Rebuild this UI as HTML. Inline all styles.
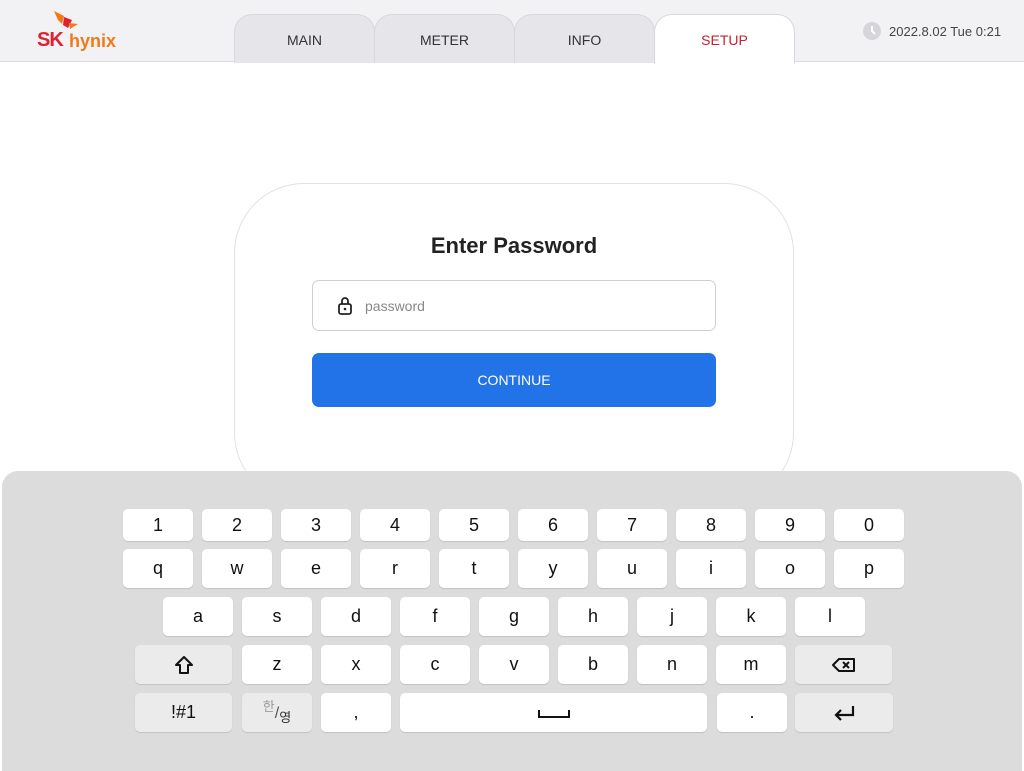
<!DOCTYPE html><html><head><style>
*{margin:0;padding:0;box-sizing:border-box}
body{width:1024px;height:768px;overflow:hidden;background:#fff;font-family:"Liberation Sans","Noto Sans CJK KR",sans-serif;position:relative}
.hdr{position:absolute;left:0;top:0;width:1024px;height:62px;background:#f2f2f4;border-bottom:1px solid #dcdcdf}
.tab{position:absolute;top:14px;height:49px;width:141px;background:#e6e5e9;border:1px solid #d8d8dc;border-bottom:none;border-radius:18px 18px 0 0;text-align:center;line-height:50px;font-size:14px;color:#333}
.tab.on{background:#fff;color:#c8202f;height:50px}
.card{position:absolute;left:234px;top:183px;width:560px;height:320px;border:1px solid #e2e2e2;border-radius:70px;background:#fff}
.kb{position:absolute;left:2px;top:471px;width:1020px;height:300px;background:#dcdcdc;border-radius:16px 16px 0 0}
.k{position:absolute;width:70px;height:32px;background:#fff;border-radius:5px;box-shadow:0 1px 1px rgba(0,0,0,.12);text-align:center;font-size:18px;color:#111;line-height:32px}
.k.g{background:#ebebeb}
</style></head><body>
<div class="hdr">
<svg style="position:absolute;left:52px;top:10px" width="30" height="24" viewBox="0 0 30 24"><path d="M2 1 L12 6 L10 14 L6 10Z" fill="#f07a1a"/><path d="M12 7 L20 10 L16 18 L11 15Z" fill="#e2202f"/><path d="M17 13 L26 14 L18 19Z" fill="#f07a1a"/></svg>
<div style="position:absolute;left:37px;top:29px;font-weight:bold;font-size:20px;color:#e2202f;letter-spacing:-1px">SK</div>
<div style="position:absolute;left:69px;top:31px;font-size:18px;color:#f07a1a;font-weight:bold">hynix</div>
<div class="tab" style="left:234px">MAIN</div>
<div class="tab" style="left:374px">METER</div>
<div class="tab" style="left:514px">INFO</div>
<div class="tab on" style="left:654px">SETUP</div>
<div style="position:absolute;left:863px;top:22px;width:18px;height:18px;border-radius:50%;background:#d6d6da"></div>
<svg style="position:absolute;left:863px;top:22px" width="18" height="18"><path d="M9 4 V9 L12 12" stroke="#fff" stroke-width="2" fill="none"/></svg>
<div style="position:absolute;left:889px;top:24px;font-size:13px;color:#444">2022.8.02 Tue 0:21</div>
</div>
<div class="card"></div>
<div style="position:absolute;left:234px;top:233px;width:560px;text-align:center;font-size:22px;font-weight:bold;color:#222">Enter Password</div>
<div style="position:absolute;left:312px;top:280px;width:404px;height:51px;border:1px solid #cfcfcf;border-radius:7px"></div>
<svg style="position:absolute;left:337px;top:296px" width="16" height="20" viewBox="0 0 16 20"><rect x="2" y="8" width="12" height="10" rx="2" fill="none" stroke="#222" stroke-width="1.8"/><path d="M5 8 V5 a3 3 0 0 1 6 0 V8" fill="none" stroke="#222" stroke-width="1.8"/><circle cx="8" cy="13" r="1.3" fill="#222"/></svg>
<div style="position:absolute;left:365px;top:298px;font-size:14px;color:#888">password</div>
<div style="position:absolute;left:312px;top:353px;width:404px;height:54px;background:#2272e8;border-radius:7px;color:#fff;text-align:center;line-height:54px;font-size:14px">CONTINUE</div>
<div class="kb"></div>
<div id="keys"></div>
<script>
var h='';function k(x,y,w,t,c){h+='<div class="k'+(c?' g':'')+'" style="left:'+x+'px;top:'+y+'px;width:'+w+'px'+(y>540?';height:39px;line-height:39px':'')+'">'+t+'</div>';}
'1234567890'.split('').forEach(function(c,i){k(123+79*i,509,70,c)});
'qwertyuiop'.split('').forEach(function(c,i){k(123+79*i,549,70,c)});
'asdfghjkl'.split('').forEach(function(c,i){k(163+79*i,597,70,c)});
k(135,645,97,'<svg width="20" height="20" viewBox="0 0 20 20" style="vertical-align:middle"><path d="M10 2 L18 10 H14 V18 H6 V10 H2Z" fill="none" stroke="#111" stroke-width="2" stroke-linejoin="round"/></svg>',1);
'zxcvbnm'.split('').forEach(function(c,i){k(242+79*i,645,70,c)});
k(795,645,97,'<svg width="24" height="16" viewBox="0 0 24 16" style="vertical-align:middle"><path d="M7 2 H22 V14 H7 L1 8Z" fill="none" stroke="#111" stroke-width="2" stroke-linejoin="round"/><path d="M11 5 L17 11 M17 5 L11 11" stroke="#111" stroke-width="2"/></svg>',1);
k(135,693,97,'!#1',1);
k(242,693,70,'<span style="font-size:13px;color:#999;position:relative;top:-7px">한</span><span style="font-size:16px;color:#555">/</span><span style="font-size:13px;color:#333;position:relative;top:4px">영</span>',1);
k(321,693,70,',');
k(400,693,307,'<svg width="32" height="12" style="vertical-align:middle"><path d="M1 3 V10 H31 V3" fill="none" stroke="#111" stroke-width="2"/></svg>');
k(717,693,70,'.');
k(795,693,98,'<svg width="24" height="18" viewBox="0 0 24 18" style="vertical-align:middle"><path d="M21 2 V11 H4 M9 6 L4 11 L9 16" fill="none" stroke="#111" stroke-width="2.2"/></svg>',1);
document.getElementById('keys').innerHTML=h;
</script>
</body></html>
